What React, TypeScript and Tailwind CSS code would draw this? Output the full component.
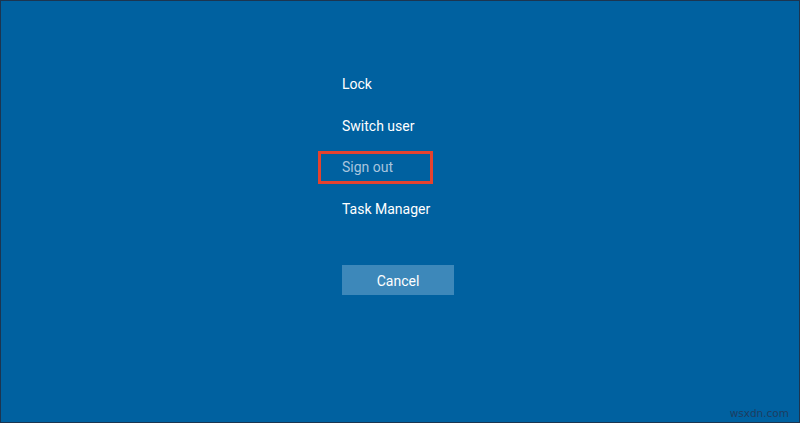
import React from "react";

export default function App() {
  const font = { fontFamily: 'Roboto, "Noto Sans", sans-serif' };
  return (
    <div
      className="relative w-[800px] h-[423px] overflow-hidden border border-[#1c3550] bg-[#0061a0] text-white"
      style={font}
    >
      <div className="flex flex-col pl-[341px] pt-[72px]">
        <div className="h-[41.5px] text-[14px] leading-[22px]">Lock</div>
        <div className="h-[41.5px] text-[14px] leading-[22px]">Switch user</div>
        <div className="relative h-[41.5px] text-[14px] leading-[22px] text-[#a9c5de]">
          Sign out
          <div className="absolute left-[-24px] top-[-5px] w-[115px] h-[33px] border-[3px] border-[#e5422e]" />
        </div>
        <div className="h-[41.5px] text-[14px] leading-[22px]">Task Manager</div>
        <div className="mt-[26px] flex h-[30px] w-[112px] items-center justify-center bg-[#3d88ba] pt-[2px] text-[14px]">
          Cancel
        </div>
      </div>
      <div
        className="absolute right-[10px] bottom-[2px] text-[10.5px] leading-[14px] text-[#1d3d60]"
        style={{ fontFamily: '"DejaVu Sans", sans-serif' }}
      >
        wsxdn.com
      </div>
    </div>
  );
}
